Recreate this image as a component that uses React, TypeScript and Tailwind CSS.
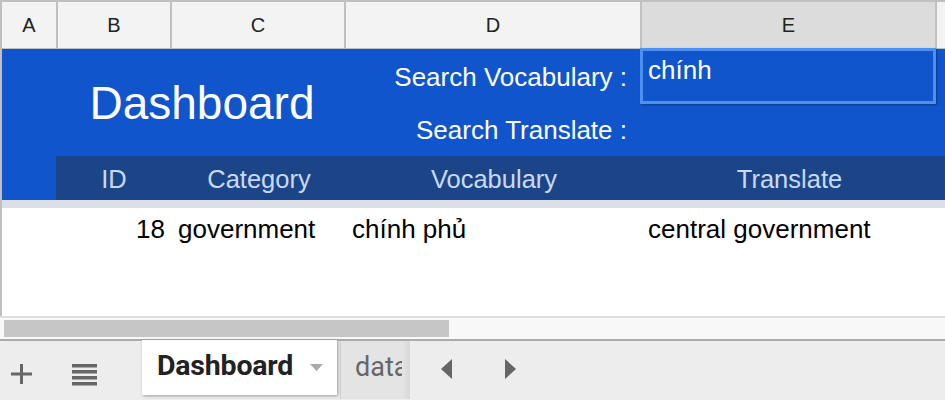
import React from "react";

const sans = "font-['Liberation_Sans',Arial,sans-serif]";

export default function App() {
  return (
    <div className={`w-[945px] h-[400px] overflow-hidden bg-white flex flex-col ${sans}`}>
      {/* top border */}
      <div className="h-[2px] bg-[#c0c0c0] shrink-0" />
      {/* grid area */}
      <div className="h-[314px] shrink-0 border-l-2 border-[#c0c0c0] flex flex-col bg-white">
        {/* column headers */}
        <div className="h-[47px] flex border-b border-[#c0c0c0] bg-[#f3f3f3] text-[20px] text-[#222]">
          <div className="w-[56px] shrink-0 border-r-2 border-[#c0c0c0] flex items-center justify-center">A</div>
          <div className="w-[114px] shrink-0 border-r-2 border-[#c0c0c0] flex items-center justify-center">B</div>
          <div className="w-[174px] shrink-0 border-r-2 border-[#c0c0c0] flex items-center justify-center">C</div>
          <div className="w-[296px] shrink-0 border-r-2 border-[#c0c0c0] flex items-center justify-center">D</div>
          <div className="w-[295px] shrink-0 border-r-2 border-[#c0c0c0] bg-[#dcdcdc] flex items-center justify-center">E</div>
          <div className="flex-1" />
        </div>
        {/* blue block */}
        <div className="bg-[#1155cc] flex flex-col">
          <div className="h-[107px] flex">
            <div className="w-[56px] shrink-0" />
            <div className="w-[288px] shrink-0 flex items-center justify-center text-white text-[46px] pt-[2px]">
              Dashboard
            </div>
            <div className="w-[296px] shrink-0 flex flex-col text-white text-[26px]">
              <div className="h-[55px] flex items-center justify-end pr-[15px] pt-[2px]">Search Vocabulary :</div>
              <div className="h-[52px] flex items-center justify-end pr-[15px]">Search Translate :</div>
            </div>
            <div className="w-[295px] shrink-0 relative">
              <div className="absolute left-[-2px] top-[-1px] w-[296px] h-[56px] border-[3px] border-[#4d90f0] shadow-[1px_1px_2px_rgba(0,0,0,0.35)] text-white text-[26px] leading-none pl-[5px] pt-[6px]">
                chính
              </div>
            </div>
            <div className="flex-1" />
          </div>
          <div className="h-[44px] flex">
            <div className="w-[54px] shrink-0" />
            <div className="flex-1 bg-[#1c4587] flex text-[#c9daf8] text-[25.5px] pt-[2px]">
              <div className="w-[116px] shrink-0 flex items-center justify-center">ID</div>
              <div className="w-[174px] shrink-0 flex items-center justify-center">Category</div>
              <div className="w-[296px] shrink-0 flex items-center justify-center">Vocabulary</div>
              <div className="w-[295px] shrink-0 flex items-center justify-center">Translate</div>
            </div>
          </div>
        </div>
        {/* frozen divider */}
        <div className="h-[8px] bg-[#dadfe8]" />
        {/* data row */}
        <div className="h-[42px] flex items-center text-[26px] text-black">
          <div className="w-[56px] shrink-0" />
          <div className="w-[114px] shrink-0 text-right pr-[7px]">18</div>
          <div className="w-[174px] shrink-0 pl-[6px]">government</div>
          <div className="w-[296px] shrink-0 pl-[6px]">chính phủ</div>
          <div className="w-[295px] shrink-0 pl-[6px]">central government</div>
        </div>
        <div className="flex-1" />
      </div>
      {/* scrollbar */}
      <div className="h-[25px] shrink-0 border-t-2 border-[#dedede] border-b-2 border-b-[#ababab] bg-[#f8f8f8] pt-[2px] pl-[4px]">
        <div className="w-[445px] h-[17px] bg-[#c6c6c6]" />
      </div>
      {/* tab bar */}
      <div className="flex-1 bg-[#ededed] flex items-stretch font-['Roboto',Arial,sans-serif]">
        <div className="w-[44px] shrink-0 flex items-center justify-center pt-[6px]">
          <svg width="22" height="22" viewBox="0 0 22 22">
            <rect x="0" y="9.5" width="21" height="3" fill="#666" />
            <rect x="9" y="1" width="3" height="20" fill="#666" />
          </svg>
        </div>
        <div className="w-[80px] shrink-0 flex items-center justify-center pt-[8px]">
          <svg width="25" height="22" viewBox="0 0 25 22">
            <rect x="0" y="0" width="25" height="3.5" fill="#666" />
            <rect x="0" y="6" width="25" height="3.5" fill="#666" />
            <rect x="0" y="12" width="25" height="3.5" fill="#666" />
            <rect x="0" y="18" width="25" height="3.5" fill="#666" />
          </svg>
        </div>
        <div className="w-[18px] shrink-0" />
        <div className="w-[195px] h-[55px] -mt-[1px] shrink-0 bg-white shadow-[1px_1px_3px_rgba(0,0,0,0.35)] flex items-center pl-[15px] pb-[2px]">
          <span className="text-[28.5px] font-bold text-[#222] tracking-[-0.2px]">Dashboard</span>
          <svg className="ml-[17px] mt-[2px]" width="13" height="8" viewBox="0 0 13 8">
            <polygon points="0,0 13,0 6.5,7" fill="#aaa" />
          </svg>
        </div>
        <div className="w-[3px] shrink-0" />
        <div className="w-[70px] h-[58px] shrink-0 bg-[#e4e4e4] border-l border-[#cfcfcf] overflow-hidden flex items-center pl-[14px] pb-[6px] relative">
          <span className="text-[27px] text-[#666] whitespace-nowrap">data</span>
          <div className="absolute right-0 top-0 bottom-0 w-[8px] bg-gradient-to-r from-[#e4e4e4] to-[#d8d8d8]" />
        </div>
        <div className="w-[31px] shrink-0" />
        <div className="flex items-center pb-[4px]">
          <svg width="12" height="20" viewBox="0 0 12 20">
            <polygon points="11,0 11,20 0,10" fill="#666" />
          </svg>
        </div>
        <div className="w-[51px] shrink-0" />
        <div className="flex items-center pb-[4px]">
          <svg width="12" height="20" viewBox="0 0 12 20">
            <polygon points="1,0 1,20 12,10" fill="#666" />
          </svg>
        </div>
        <div className="flex-1" />
      </div>
    </div>
  );
}
